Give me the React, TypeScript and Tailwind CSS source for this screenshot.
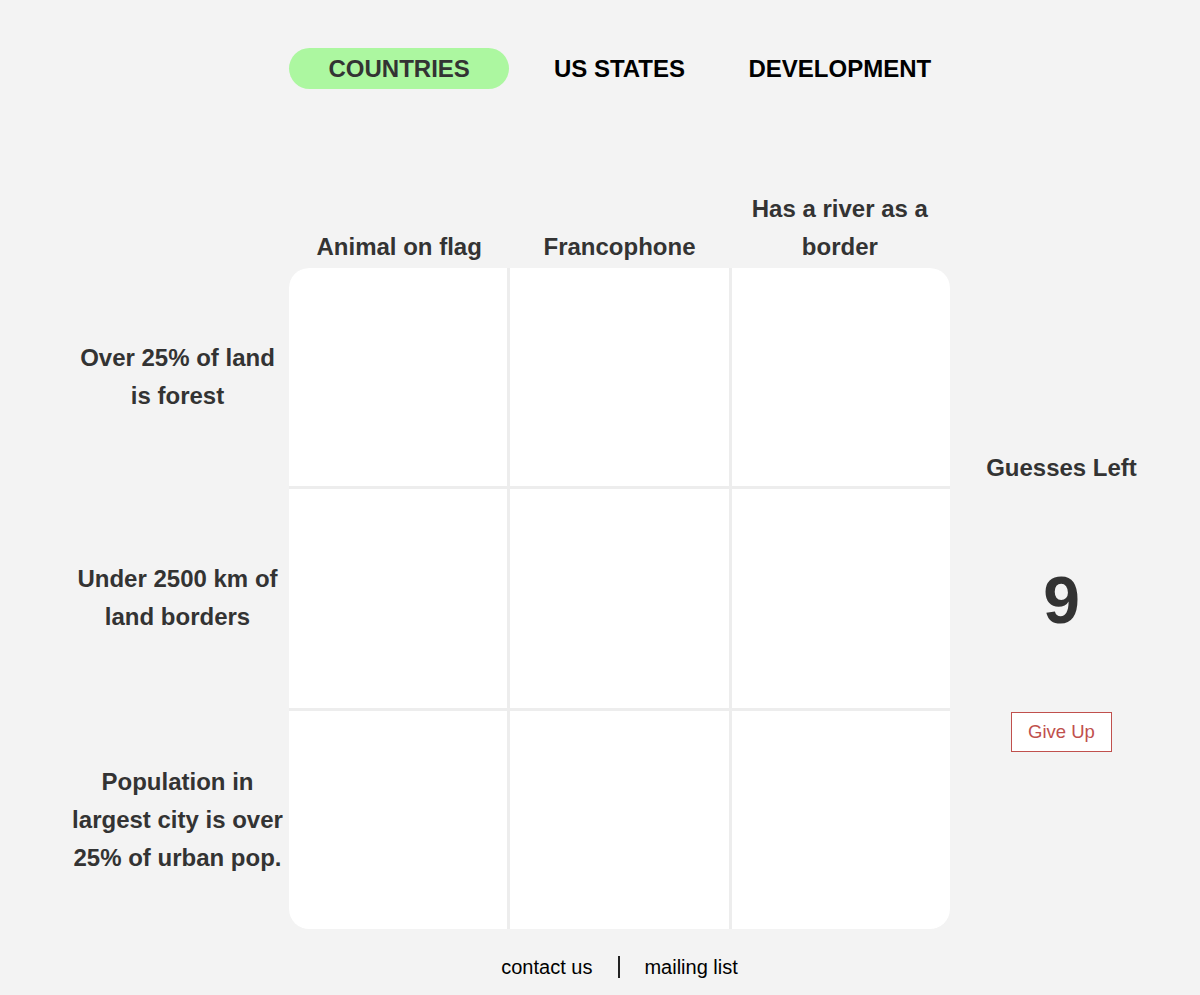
import { useState } from 'react';

const tabs = ['COUNTRIES', 'US STATES', 'DEVELOPMENT'];

const columns = ['Animal on flag', 'Francophone', 'Has a river as a border'];

const rows = [
  'Over 25% of land is forest',
  'Under 2500 km of land borders',
  'Population in largest city is over 25% of urban pop.',
];

const App = () => {
  const [activeTab, setActiveTab] = useState(0);
  const [guesses] = useState(9);

  return (
    <div className="min-h-screen bg-[#f3f3f3] font-['Liberation_Sans',Arial,sans-serif] text-[#333]">
      <div className="ml-[66px] grid grid-cols-[223px_661px_223px]">
        {/* Nav */}
        <div />
        <nav className="mt-[48px] grid grid-cols-3 gap-0">
          {tabs.map((tab, i) => (
            <button
              key={tab}
              onClick={() => setActiveTab(i)}
              className={
                activeTab === i
                  ? 'h-[41px] rounded-full bg-[#acf7a0] text-[24px] font-bold text-[#333]'
                  : 'h-[41px] rounded-full text-[24px] font-bold text-black'
              }
            >
              {tab}
            </button>
          ))}
        </nav>
        <div />

        {/* Column headers */}
        <div />
        <div className="mt-[101px] grid h-[78px] grid-cols-3 items-end pb-[4px]">
          {columns.map((col) => (
            <div key={col} className="px-4 text-center text-[24px] font-bold leading-[38px]">
              {col}
            </div>
          ))}
        </div>
        <div />

        {/* Row labels */}
        <div className="grid grid-rows-3 gap-[3px] px-[4px]">
          {rows.map((row) => (
            <div key={row} className="flex items-center justify-center text-center text-[24px] font-bold leading-[38px]">
              {row}
            </div>
          ))}
        </div>

        {/* Board */}
        <div className="grid h-[661px] w-[661px] grid-cols-3 grid-rows-3 gap-[3px] overflow-hidden rounded-[20px] bg-[#ededed]">
          {Array.from({ length: 9 }).map((_, i) => (
            <button key={i} className="bg-white" />
          ))}
        </div>

        {/* Side panel */}
        <div className="flex flex-col items-center">
          <div className="mt-[181px] text-[24px] font-bold leading-[38px]">Guesses Left</div>
          <div className="mt-[81px] text-[66px] font-bold leading-[64px]">{guesses}</div>
          <button className="mt-[80px] h-[40px] w-[101px] border-[1.5px] border-[#c0504d] bg-white text-[18.5px] text-[#c0504d]">
            Give Up
          </button>
        </div>

        {/* Footer */}
        <div />
        <footer className="mt-[26px] flex items-center justify-center text-[20px] leading-[24px] text-black">
          <a href="#">contact us</a>
          <span className="ml-[26px] mr-[24px] h-[22px] w-[2px] bg-[#222]" />
          <a href="#">mailing list</a>
        </footer>
        <div />
      </div>
    </div>
  );
};

export default App;
